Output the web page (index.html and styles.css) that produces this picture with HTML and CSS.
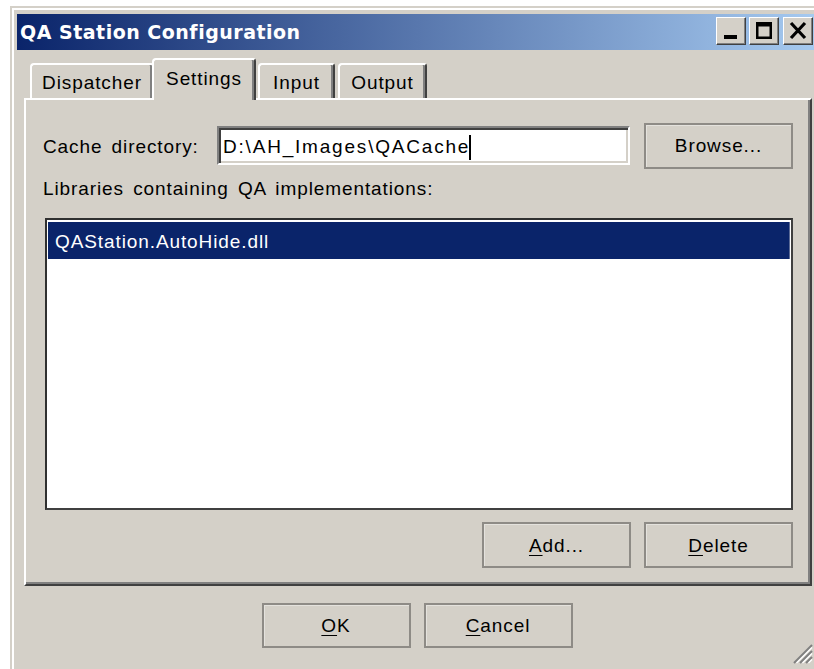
FILE: index.html
```html
<!DOCTYPE html>
<html lang="en">
<head>
<meta charset="utf-8">
<title>QA Station Configuration</title>
<link rel="stylesheet" href="styles.css">
</head>
<body>
<div class="window">
  <div class="titlebar">
    <span class="title">QA Station Configuration</span>
    <div class="caption-buttons">
      <div class="cap-btn">
        <svg width="26" height="24" viewBox="0 0 26 24"><rect x="6" y="16" width="13" height="4" fill="#000"/></svg>
      </div>
      <div class="cap-btn">
        <svg width="26" height="24" viewBox="0 0 26 24"><path d="M5 3h16v17H5z M7.5 7.5v10h11v-10z" fill="#000" fill-rule="evenodd"/></svg>
      </div>
      <div class="cap-btn close">
        <svg width="26" height="24" viewBox="0 0 26 24"><path d="M6 4L20 19M20 4L6 19" stroke="#000" stroke-width="3.2"/></svg>
      </div>
    </div>
  </div>

  <div class="tabs">
    <div class="tab">Dispatcher</div>
    <div class="tab active">Settings</div>
    <div class="tab">Input</div>
    <div class="tab">Output</div>
  </div>

  <div class="panel">
    <div class="field-row">
      <span class="field-label">Cache directory:</span>
      <div class="textbox">D:\AH_Images\QACache<span class="caret"></span></div>
      <div class="btn browse">Browse...</div>
    </div>
    <div class="list-label">Libraries containing QA implementations:</div>
    <div class="listbox">
      <div class="list-item selected">QAStation.AutoHide.dll</div>
    </div>
    <div class="list-actions">
      <div class="btn"><u>A</u>dd...</div>
      <div class="btn"><u>D</u>elete</div>
    </div>
  </div>

  <div class="footer">
    <div class="btn"><u>O</u>K</div>
    <div class="btn"><u>C</u>ancel</div>
  </div>

  <svg class="grip" width="22" height="22" viewBox="0 0 22 22">
    <path d="M21 3L3 21M21 9L9 21M21 15L15 21" stroke="#808080" stroke-width="2"/>
    <path d="M21 5.5L5.5 21M21 11.5L11.5 21M21 17.5L17.5 21" stroke="#ffffff" stroke-width="1.2"/>
  </svg>
</div>
</body>
</html>
```

FILE: styles.css
```css
html, body {
  margin: 0;
  height: 669px;
  overflow: hidden;
  background: #ffffff;
}

body {
  font-family: "Liberation Sans", Arial, sans-serif;
  font-size: 19px;
  letter-spacing: 0.9px;
  word-spacing: 3px;
  color: #000;
}

.window {
  position: relative;
  box-sizing: border-box;
  width: 814px;
  height: 680px;
  margin: 6px 0 0 10px;
  padding: 6px 5px 3px 5px;
  background: #d4d0c8;
  border: 2px solid;
  border-color: #d4d0c8 #404040 #404040 #d4d0c8;
  box-shadow: inset 2px 2px #ffffff, inset -2px -2px #808080;
}

/* caption */
.titlebar {
  height: 36px;
  display: flex;
  align-items: center;
  justify-content: space-between;
  background: linear-gradient(to right, #0a246a 0%, #a6caf0 100%);
}

.title {
  padding-left: 3px;
  font-family: "DejaVu Sans", Verdana, sans-serif;
  font-weight: bold;
  font-size: 19px;
  letter-spacing: 0.5px;
  word-spacing: 0;
  color: #ffffff;
}

.caption-buttons {
  display: flex;
  align-self: flex-start;
  margin-top: 3px;
  margin-right: 4px;
}

.cap-btn {
  box-sizing: border-box;
  width: 30px;
  height: 28px;
  display: flex;
  align-items: center;
  justify-content: center;
  background: #d4d0c8;
  border: 1px solid;
  border-color: #ffffff #404040 #404040 #ffffff;
  box-shadow: inset -1px -1px #808080;
}

.cap-btn + .cap-btn { margin-left: 3px; }
.cap-btn.close { margin-left: 4px; }

/* tabs */
.tabs {
  display: flex;
  align-items: flex-end;
  height: 48px;
  margin: 0 5px 0 7px;
  padding-left: 6px;
}

.tab {
  box-sizing: border-box;
  height: 35px;
  padding-top: 5px;
  display: flex;
  justify-content: center;
  line-height: 26px;
  background: #d4d0c8;
  border-top: 2px solid #ffffff;
  border-left: 2px solid #ffffff;
  border-right: 2px solid #404040;
  border-radius: 4px 3px 0 0;
  box-shadow: inset -2px 0 #808080;
}

.tab:nth-child(1) { width: 124px; }
.tab:nth-child(3) { width: 77px; margin-left: 2px; }
.tab:nth-child(4) { width: 89px; margin-left: 3px; }

.tab.active {
  position: relative;
  z-index: 1;
  width: 104px;
  height: 42px;
  margin-left: -2px;
  margin-bottom: -2px;
  padding-top: 6px;
}

/* page */
.panel {
  box-sizing: border-box;
  height: 488px;
  margin: 0 5px 0 7px;
  padding: 23px 17px 17px 19px;
  border: 2px solid;
  border-color: #ffffff #404040 #404040 #ffffff;
  box-shadow: inset -2px -2px #808080;
}

.field-row {
  display: flex;
  align-items: center;
  height: 45px;
}

.field-label {
  width: 174px;
  margin-left: -2px;
  padding-top: 3px;
  flex: none;
}

.textbox {
  box-sizing: border-box;
  width: 413px;
  height: 39px;
  padding: 3px 0 0 4px;
  display: flex;
  align-items: center;
  background: #ffffff;
  border: 2px solid;
  border-color: #808080 #ffffff #ffffff #808080;
  box-shadow: inset 2px 2px #404040, inset -2px -2px #d4d0c8;
  letter-spacing: 1.8px;
}

.caret {
  display: inline-block;
  width: 2px;
  height: 25px;
  margin-left: -1px;
  background: #000;
}

.browse { margin-left: 14px; }

.list-label {
  box-sizing: content-box;
  height: 22px;
  margin: 8px 0 18px -2px;
  padding-top: 2px;
  line-height: 22px;
}

.listbox {
  box-sizing: border-box;
  height: 292px;
  padding: 2px 1px;
  background: #ffffff;
  border: 2px solid;
  border-color: #303030 #404040 #404040 #303030;
}

.list-item {
  height: 37px;
  line-height: 40px;
  padding-left: 7px;
}

.list-item.selected {
  background: #0a246a;
  color: #ffffff;
  box-shadow: inset -1px 0 #5b6a96;
}

.list-actions {
  display: flex;
  justify-content: flex-end;
  gap: 13px;
  margin-top: 12px;
}

/* push buttons */
.btn {
  box-sizing: border-box;
  width: 149px;
  height: 46px;
  padding-top: 1px;
  display: flex;
  align-items: center;
  justify-content: center;
  background: #d4d0c8;
  border: 2px solid #8e8b86;
  box-shadow: inset 1px 1px #e4e2dd;
}

.btn u { text-underline-offset: 3px; }

.footer {
  display: flex;
  justify-content: center;
  gap: 13px;
  margin-top: 17px;
}

.footer .btn { height: 45px; }

.grip {
  position: absolute;
  left: 779px;
  top: 634px;
}
```
